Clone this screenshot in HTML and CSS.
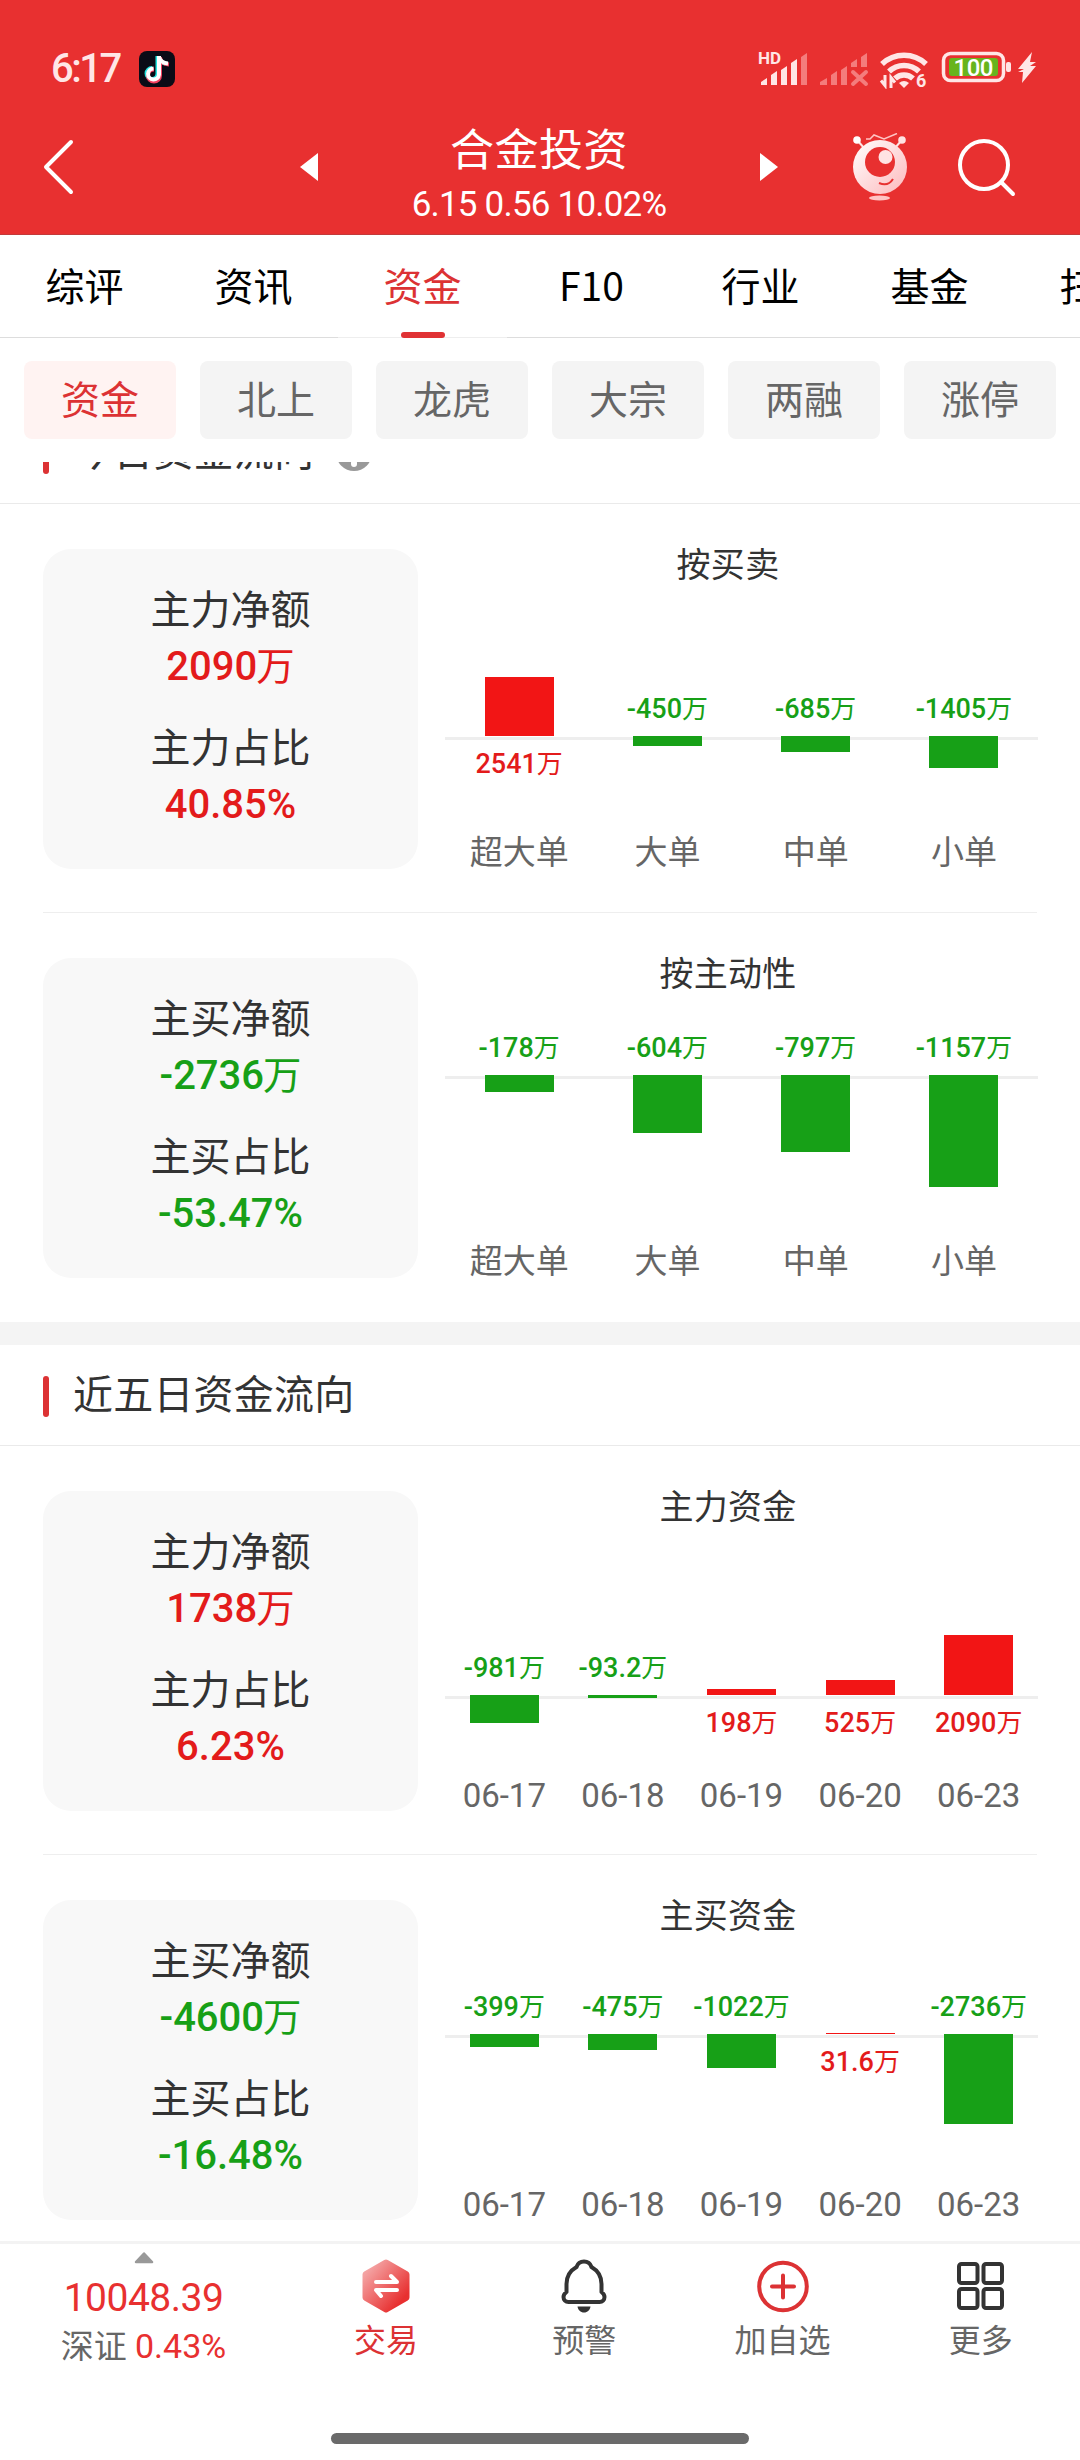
FILE: index.html
```html
<!DOCTYPE html>
<html lang="zh-CN">
<head>
  <meta charset="UTF-8">
  <meta name="viewport" content="width=device-width, initial-scale=1.0">
  <title>合金投资 - 资金</title>
  <link rel="stylesheet" href="styles.css">
</head>
<body>
  <header class="header">
    <div class="status-bar">
      <span class="time">6:17</span>
      <svg class="app-icon" viewBox="0 0 36 36" width="36" height="36">
        <rect width="36" height="36" rx="8" fill="#0b0b16"/>
        <g fill="none" stroke-width="4">
          <path d="M18.500 5v18a5.500 5.500 0 1 1-5.500-6M18.500 6c1 4 4 6 8 6.500" stroke="#25e5e0"/>
          <path d="M21 6v18.500a6 6 0 1 1-6-6M21 7c1 4 4 6 9 6.500" stroke="#f5405f"/>
          <path d="M20 5v18.500a5.500 5.500 0 1 1-5.500-6M20 6c1 4 4 6 9 6.500" stroke="#fff"/>
        </g>
      </svg>
      <svg class="status-icons" viewBox="0 0 280 40" width="280" height="40">
        <g fill="#ffe6e6">
          <text x="0" y="15" font-size="17" font-weight="700" textLength="23">HD</text>
          <path d="M3 36v-3l6-4v7zM13 36V26l6-4v14zM23 36V21l6-4v19zM33 36V14l6-4v26z"/>
        </g>
        <g fill="#f47c7c">
          <path d="M43 36V8l6-4v32zM62 36v-3l7-4v7zM73 36V26l6-4v14zM83 36V21l6-4v19zM93 18v-4l6-4v8zM103 18V8l6-4v14z"/>
          <path d="M95 23l13 12M108 23L95 35" stroke="#f47c7c" stroke-width="4" stroke-linecap="round"/>
        </g>
        <g fill="none" stroke="#ffe6e6" stroke-width="5.500">
          <path d="M124 15a32 32 0 0 1 44 0M131 22.500a21.500 21.500 0 0 1 30 0M137 29.500a13 13 0 0 1 18 0"/>
          <path d="M127 26v10.500l-4-5M133 39v-10.500l4 5" stroke-width="3"/>
        </g>
        <path d="M141 34q5-4 10 0l-5 5z" fill="#ffe6e6"/>
        <text x="158" y="38" font-size="18" font-weight="700" fill="#ffe6e6">6</text>
        <rect x="185.500" y="4.500" width="60" height="27" rx="7" fill="none" stroke="#ffe6e6" stroke-width="3.500"/>
        <rect x="191" y="9" width="49" height="18" rx="3" fill="#68b41d"/>
        <text x="215.500" y="26.500" font-size="24" font-weight="500" fill="#fff" text-anchor="middle" textLength="40">100</text>
        <rect x="248" y="13" width="5" height="10" rx="2" fill="#ffe6e6"/>
        <path d="M274 3l-14 17h6l-6 3 5 0-1 11 14-17h-6l6-4h-6z" fill="#ffe6e6"/>
      </svg>
    </div>
    <div class="nav-bar">
      <svg class="back" viewBox="0 0 32 60" width="32" height="60">
        <path d="M28 5L3 30l25 25" fill="none" stroke="#fff" stroke-width="4" stroke-linecap="round" stroke-linejoin="round"/>
      </svg>
      <svg class="prev" viewBox="0 0 18 28" width="18" height="28"><path d="M18 0v28L0 14z" fill="#fff"/></svg>
      <div class="stock">
        <h1>合金投资</h1>
        <p>6.15 0.56 10.02%</p>
      </div>
      <svg class="next" viewBox="0 0 18 28" width="18" height="28"><path d="M0 0v28l18-14z" fill="#fff"/></svg>
      <svg class="robot" viewBox="0 0 54 68" width="54" height="68">
        <defs>
          <linearGradient id="robotFill" x1="0" y1="0" x2="1" y2="1">
            <stop offset="0" stop-color="#fff"/>
            <stop offset="1" stop-color="#fdb9bc"/>
          </linearGradient>
        </defs>
        <path d="M4 7l8 9M49 7l-8 9" stroke="#ffe3e3" stroke-width="2"/>
        <circle cx="4" cy="7" r="3.800" fill="#fff"/>
        <circle cx="49" cy="7" r="3.800" fill="#ffe3e3"/>
        <path d="M13 6h4l4-4 10 4 13-5.500" fill="none" stroke="#ffc4c4" stroke-width="1.500"/>
        <circle cx="27" cy="34" r="27" fill="url(#robotFill)"/>
        <circle cx="27" cy="29" r="15" fill="#e83030"/>
        <circle cx="32.500" cy="24" r="7" fill="#ffe3e3"/>
        <path d="M26 50q9 4 14-4" fill="none" stroke="#e83030" stroke-width="2"/>
        <ellipse cx="26.500" cy="65" rx="10.500" ry="2.500" fill="#ffc4c4"/>
      </svg>
      <svg class="search" viewBox="0 0 60 60" width="60" height="60">
        <path d="M45 45l12 12" stroke="#fff" stroke-width="4" stroke-linecap="round"/>
        <circle cx="28" cy="28" r="24" fill="none" stroke="#fff" stroke-width="4"/>
      </svg>
    </div>
  </header>

  <nav class="tabs">
    <a class="tab">综评</a>
    <a class="tab">资讯</a>
    <a class="tab active">资金</a>
    <a class="tab">F10</a>
    <a class="tab">行业</a>
    <a class="tab">基金</a>
    <a class="tab">扫雷</a>
  </nav>

  <div class="chips">
    <span class="chip active">资金</span>
    <span class="chip">北上</span>
    <span class="chip">龙虎</span>
    <span class="chip">大宗</span>
    <span class="chip">两融</span>
    <span class="chip">涨停</span>
  </div>

  <main class="content">
    <section class="section scrolled">
      <h2 class="section-title">今日资金流向
        <svg class="info" viewBox="0 0 36 36" width="36" height="36">
          <circle cx="18" cy="18" r="18" fill="#999"/>
          <path d="M18 8v12M18 28v1" stroke="#fff" stroke-width="6" stroke-linecap="round"/>
        </svg>
      </h2>
      <div class="row">
        <div class="card">
          <div class="label">主力净额</div>
          <div class="value up">2090<small>万</small></div>
          <div class="label">主力占比</div>
          <div class="value up">40.85%</div>
        </div>
        <div class="chart">
          <h3>按买卖</h3>
          <div class="plot" style="--axis: 161px">
            <div class="col pos"><div class="above"><i class="bar" style="height: 59px"></i></div><div class="below"><b>2541<small>万</small></b></div><span>超大单</span></div>
            <div class="col neg"><div class="above"><b>-450<small>万</small></b></div><div class="below"><i class="bar" style="height: 10px"></i></div><span>大单</span></div>
            <div class="col neg"><div class="above"><b>-685<small>万</small></b></div><div class="below"><i class="bar" style="height: 16px"></i></div><span>中单</span></div>
            <div class="col neg"><div class="above"><b>-1405<small>万</small></b></div><div class="below"><i class="bar" style="height: 32px"></i></div><span>小单</span></div>
          </div>
        </div>
      </div>
      <div class="row">
        <div class="card">
          <div class="label">主买净额</div>
          <div class="value down">-2736<small>万</small></div>
          <div class="label">主买占比</div>
          <div class="value down">-53.47%</div>
        </div>
        <div class="chart">
          <h3>按主动性</h3>
          <div class="plot" style="--axis: 91px">
            <div class="col neg"><div class="above"><b>-178<small>万</small></b></div><div class="below"><i class="bar" style="height: 17px"></i></div><span>超大单</span></div>
            <div class="col neg"><div class="above"><b>-604<small>万</small></b></div><div class="below"><i class="bar" style="height: 58px"></i></div><span>大单</span></div>
            <div class="col neg"><div class="above"><b>-797<small>万</small></b></div><div class="below"><i class="bar" style="height: 77px"></i></div><span>中单</span></div>
            <div class="col neg"><div class="above"><b>-1157<small>万</small></b></div><div class="below"><i class="bar" style="height: 112px"></i></div><span>小单</span></div>
          </div>
        </div>
      </div>
    </section>

    <section class="section">
      <h2 class="section-title">近五日资金流向</h2>
      <div class="row">
        <div class="card">
          <div class="label">主力净额</div>
          <div class="value up">1738<small>万</small></div>
          <div class="label">主力占比</div>
          <div class="value up">6.23%</div>
        </div>
        <div class="chart">
          <h3>主力资金</h3>
          <div class="plot" style="--axis: 178px">
            <div class="col neg"><div class="above"><b>-981<small>万</small></b></div><div class="below"><i class="bar" style="height: 28px"></i></div><span class="date">06-17</span></div>
            <div class="col neg"><div class="above"><b>-93.2<small>万</small></b></div><div class="below"><i class="bar" style="height: 3px"></i></div><span class="date">06-18</span></div>
            <div class="col pos"><div class="above"><i class="bar" style="height: 6px"></i></div><div class="below"><b>198<small>万</small></b></div><span class="date">06-19</span></div>
            <div class="col pos"><div class="above"><i class="bar" style="height: 15px"></i></div><div class="below"><b>525<small>万</small></b></div><span class="date">06-20</span></div>
            <div class="col pos"><div class="above"><i class="bar" style="height: 60px"></i></div><div class="below"><b>2090<small>万</small></b></div><span class="date">06-23</span></div>
          </div>
        </div>
      </div>
      <div class="row">
        <div class="card">
          <div class="label">主买净额</div>
          <div class="value down">-4600<small>万</small></div>
          <div class="label">主买占比</div>
          <div class="value down">-16.48%</div>
        </div>
        <div class="chart">
          <h3>主买资金</h3>
          <div class="plot" style="--axis: 108px">
            <div class="col neg"><div class="above"><b>-399<small>万</small></b></div><div class="below"><i class="bar" style="height: 13px"></i></div><span class="date">06-17</span></div>
            <div class="col neg"><div class="above"><b>-475<small>万</small></b></div><div class="below"><i class="bar" style="height: 16px"></i></div><span class="date">06-18</span></div>
            <div class="col neg"><div class="above"><b>-1022<small>万</small></b></div><div class="below"><i class="bar" style="height: 34px"></i></div><span class="date">06-19</span></div>
            <div class="col pos"><div class="above"><i class="bar" style="height: 1px"></i></div><div class="below"><b>31.6<small>万</small></b></div><span class="date">06-20</span></div>
            <div class="col neg"><div class="above"><b>-2736<small>万</small></b></div><div class="below"><i class="bar" style="height: 90px"></i></div><span class="date">06-23</span></div>
          </div>
        </div>
      </div>
    </section>
  </main>

  <footer class="footer">
    <div class="toolbar">
      <div class="index">
        <svg viewBox="0 0 20 12" width="20" height="12"><path d="M10 1.500L18 10H2z" fill="#999" stroke="#999" stroke-width="2.500" stroke-linejoin="round"/></svg>
        <div class="point">10048.39</div>
        <div class="change">深证 <em>0.43%</em></div>
      </div>
      <div class="tool trade">
        <svg viewBox="0 0 54 54" width="54" height="54">
          <defs>
            <linearGradient id="tradeFill" x1="0" y1="0" x2="1" y2="1">
              <stop offset="0.1" stop-color="#f4a3a3"/>
              <stop offset="0.85" stop-color="#e83030"/>
            </linearGradient>
          </defs>
          <path d="M27 4l20 11.500v23L27 50 7 38.500v-23z" fill="url(#tradeFill)" stroke="url(#tradeFill)" stroke-width="7" stroke-linejoin="round"/>
          <path d="M17 23h21l-6-6M38 31H17l5 6" fill="none" stroke="#fff" stroke-width="4" stroke-linecap="round" stroke-linejoin="round"/>
        </svg>
        <span>交易</span>
      </div>
      <div class="tool">
        <svg viewBox="0 0 54 54" width="54" height="54">
          <path d="M27 2.500c4 0 6.500 2.500 7.500 5.500 7 4 10 10 10 17v8c2 1.500 3 3 3 5 0 3-2 5-5 5h-31c-3 0-5-2-5-5 0-2 1-3.500 3-5v-8c0-7 3-13 10-17 1-3 3.500-5.500 7.500-5.500z" fill="none" stroke="#333" stroke-width="4" stroke-linejoin="round"/>
          <path d="M20.500 47.500h13c-.5 3.500-3 6-6.500 6s-6-2.500-6.500-6z" fill="#333"/>
        </svg>
        <span>预警</span>
      </div>
      <div class="tool">
        <svg viewBox="0 0 54 54" width="54" height="54">
          <g fill="none" stroke="#dc3234" stroke-width="4" stroke-linecap="round">
            <circle cx="27" cy="27.500" r="23.800"/>
            <path d="M16 27.500h22M27 16.500v22"/>
          </g>
        </svg>
        <span>加自选</span>
      </div>
      <div class="tool">
        <svg viewBox="0 0 54 54" width="54" height="54">
          <g fill="none" stroke="#333" stroke-width="4">
            <rect x="5" y="5" width="18.500" height="19" rx="2.500"/>
            <rect x="29.500" y="5" width="18.500" height="19" rx="2.500"/>
            <rect x="5" y="30" width="18.500" height="19" rx="2.500"/>
            <rect x="29.500" y="30" width="18.500" height="19" rx="2.500"/>
          </g>
        </svg>
        <span>更多</span>
      </div>
    </div>
    <div class="home-indicator"></div>
  </footer>
</body>
</html>
```

FILE: styles.css
```css
* {
  box-sizing: border-box;
}

body {
  width: 1080px;
  height: 2460px;
  margin: 0;
  display: flex;
  flex-direction: column;
  overflow: hidden;
  background: #fff;
  color: #333;
  font-family: 'Noto Sans CJK SC', sans-serif;
}

h1, h2, h3, p {
  margin: 0;
  font-weight: 400;
}

svg {
  display: block;
  flex: none;
}

/* Header */
.header {
  flex: none;
  height: 235px;
  background: #e83030;
  color: #fff;
  border-bottom: 1px solid #c33a3a;
}

.status-bar {
  height: 100px;
  padding: 37px 42px 0 51px;
  display: flex;
  align-items: center;
}

.time {
  width: 88px;
  font-family: Roboto, sans-serif;
  font-size: 40px;
  font-weight: 500;
  line-height: 64px;
  letter-spacing: -2.5px;
  color: #ffe6e6;
}

.status-icons {
  margin-left: auto;
  font-family: Roboto, sans-serif;
}

.nav-bar {
  height: 134px;
  display: flex;
  align-items: center;
}

.back {
  margin-left: 43px;
}

.prev {
  margin-left: 225px;
}

.stock {
  width: 442px;
  padding-top: 18px;
  text-align: center;
}

.stock h1 {
  font-size: 44px;
  line-height: 58px;
  letter-spacing: 0.5px;
}

.stock p {
  font-family: Roboto, sans-serif;
  font-size: 35px;
  line-height: 58px;
  letter-spacing: -0.8px;
}

.robot {
  margin-left: 75px;
}

.search {
  margin-left: 49px;
}

/* Tabs */
.tabs {
  flex: none;
  height: 103px;
  display: flex;
  overflow: hidden;
}

.tab {
  flex: none;
  width: 169px;
  border-bottom: 1px solid #ddd;
  text-align: center;
  font-size: 39px;
  line-height: 99px;
  color: #000;
}

.tab.active {
  border-color: #eee;
  color: #dc3234;
}

.tab.active::after {
  content: '';
  display: block;
  width: 44px;
  height: 6px;
  margin: -2px auto 0;
  border-radius: 3px;
  background: #e03234;
}

.chips {
  flex: none;
  height: 124px;
  padding: 23px 24px;
  display: flex;
  gap: 24px;
}

.chip {
  width: 152px;
  height: 78px;
  border-radius: 8px;
  background: #f4f4f4;
  text-align: center;
  font-size: 39px;
  line-height: 73px;
  color: #666;
}

.chip.active {
  background: #fff3f2;
  color: #dc3234;
}

/* Content */
.content {
  flex: none;
  height: 1779px;
  overflow: hidden;
}

.section + .section {
  border-top: 23px solid #f4f4f4;
}

.section.scrolled {
  margin-top: -60px;
}

.section + .section .section-title {
  height: 101px;
}

.section-title {
  height: 102px;
  padding-left: 43px;
  display: flex;
  border-bottom: 1px solid #eaeaea;
  font-size: 40px;
  line-height: 94px;
  letter-spacing: 0.2px;
}

.section-title::before {
  content: '';
  width: 6px;
  height: 41px;
  margin: 31px 24px 0 0;
  border-radius: 3px;
  background: #dc3234;
}

.info {
  margin: 33px 0 0 22px;
}

.row {
  height: 409px;
  margin: 0 43px;
  padding-top: 45px;
  display: flex;
  border-bottom: 1px solid #eee;
}

.row:last-child {
  border-bottom: none;
}

.card {
  width: 375px;
  height: 320px;
  padding-top: 30px;
  border-radius: 28px;
  background: #f8f8f8;
  text-align: center;
  line-height: 57px;
}

.label {
  font-size: 40px;
}

.value {
  margin: 2px 0 22px;
  font-family: Roboto, 'Noto Sans CJK SC', sans-serif;
  font-size: 40px;
  font-weight: 500;
}

small {
  font-size: 0.96em;
  font-weight: 400;
}

.value small {
  margin-left: -1px;
}

.up {
  color: #e31b1b;
}

.down {
  color: #17a017;
}

/* Bar charts */
.chart {
  flex: 1;
  height: 320px;
}

.chart h3 {
  padding-left: 1px;
  font-size: 34px;
  line-height: 27px;
  letter-spacing: 0.3px;
  text-align: center;
}

.plot {
  height: 293px;
  margin: 0 -1px 0 27px;
  display: flex;
  background: linear-gradient(#eee, #eee) 0 var(--axis) / 100% 3px no-repeat;
}

.col {
  flex: 1 1 0;
  min-width: 0;
  display: flex;
  flex-direction: column;
  align-items: center;
  font-family: Roboto, 'Noto Sans CJK SC', sans-serif;
  white-space: nowrap;
}

.above,
.below {
  display: flex;
  flex-direction: column;
  align-items: center;
}

.above {
  height: calc(var(--axis) - 1px);
  justify-content: flex-end;
}

.below {
  flex: 1;
}

.bar {
  width: 69px;
}

.col b {
  font-size: 27px;
  font-weight: 500;
  line-height: 32px;
}

.above b {
  margin-bottom: 11px;
}

.below b {
  margin-top: 12px;
}

.col span {
  font-size: 33px;
  line-height: 33px;
  color: #666;
}

.col .date {
  line-height: 31px;
}

.pos b {
  color: #e31b1b;
}

.pos .bar {
  background: #f21515;
}

.neg b {
  color: #17a017;
}

.neg .bar {
  background: #17a017;
}

/* Bottom toolbar */
.footer {
  flex: 1;
  border-top: 3px solid #f3f3f3;
  background: #fff;
}

.toolbar {
  height: 189px;
  display: flex;
}

.index {
  width: 287px;
  padding-top: 8px;
  display: flex;
  flex-direction: column;
  align-items: center;
}

.point {
  margin-top: 9px;
  font-family: Roboto, sans-serif;
  font-size: 39px;
  line-height: 50px;
  letter-spacing: -0.5px;
  color: #e83030;
}

.change {
  font-family: Roboto, 'Noto Sans CJK SC', sans-serif;
  font-size: 33px;
  line-height: 46px;
  color: #666;
}

.change em {
  font-style: normal;
  font-size: 34px;
  color: #e83030;
}

.tool {
  flex: 1;
  padding-top: 15px;
  display: flex;
  flex-direction: column;
  align-items: center;
  font-size: 32px;
  line-height: 50px;
  color: #666;
}

.tool.trade {
  color: #dc3234;
}

.home-indicator {
  width: 418px;
  height: 11px;
  margin: 0 auto;
  border-radius: 6px;
  background: #6a6a6a;
}
```
